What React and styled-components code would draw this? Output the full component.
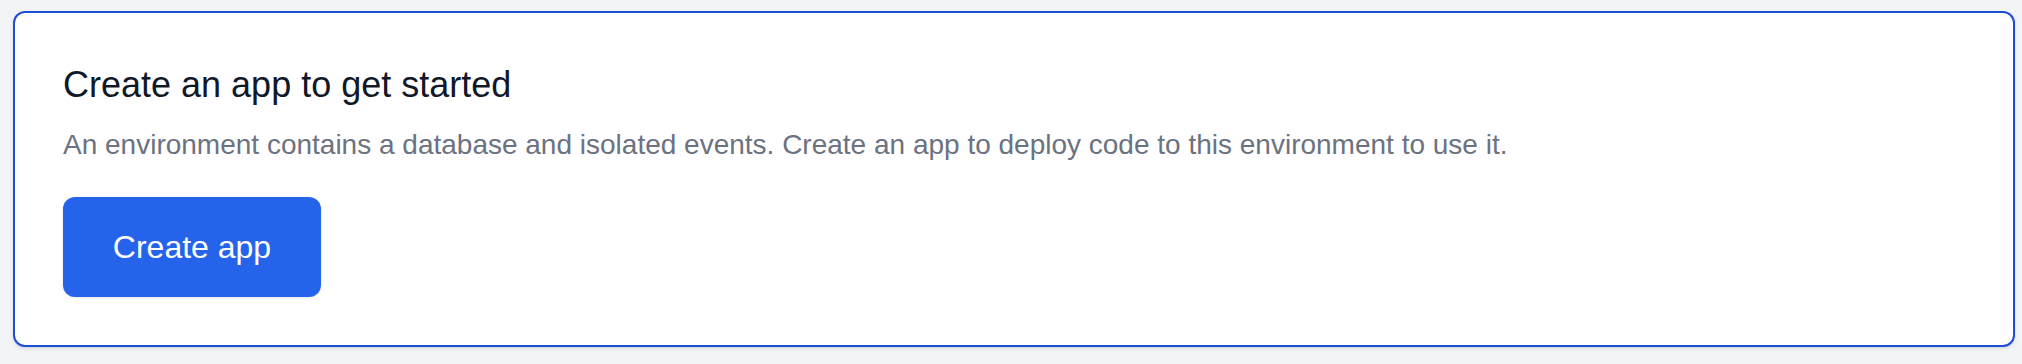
import styled, { createGlobalStyle } from "styled-components";

const Global = createGlobalStyle`
  html, body {
    margin: 0;
    padding: 0;
    background: #f3f4f6;
    font-family: "Liberation Sans", Arial, sans-serif;
  }
`;

export default function App() {
  return (
    <Page>
      <Global />
      <Card>
        <Title>Create an app to get started</Title>
        <Text>
          An environment contains a database and isolated events. Create an app to deploy code to this
          environment to use it.
        </Text>
        <Button>Create app</Button>
      </Card>
    </Page>
  );
}

const Page = styled.div`
  padding: 11px 7px 17px 13px;
`;

const Card = styled.div`
  display: flex;
  flex-direction: column;
  align-items: flex-start;
  background: #ffffff;
  border: 2px solid #1d4ed8;
  border-radius: 12px;
  padding: 48px;
  box-shadow: 0 2px 4px rgba(0, 0, 0, 0.08), 0 1px 2px rgba(0, 0, 0, 0.06);
`;

const Title = styled.h2`
  margin: 0;
  font-size: 36px;
  line-height: 48px;
  font-weight: 400;
  color: #111827;
`;

const Text = styled.p`
  margin: 15px 0 0;
  font-size: 28px;
  line-height: 42px;
  color: #6b7280;
`;

const Button = styled.button`
  margin-top: 31px;
  width: 258px;
  height: 100px;
  border: none;
  border-radius: 12px;
  background: #2563eb;
  color: #ffffff;
  font-family: "Liberation Sans", Arial, sans-serif;
  font-size: 32px;
  box-shadow: 0 1px 3px rgba(0, 0, 0, 0.1);
  cursor: pointer;
`;
